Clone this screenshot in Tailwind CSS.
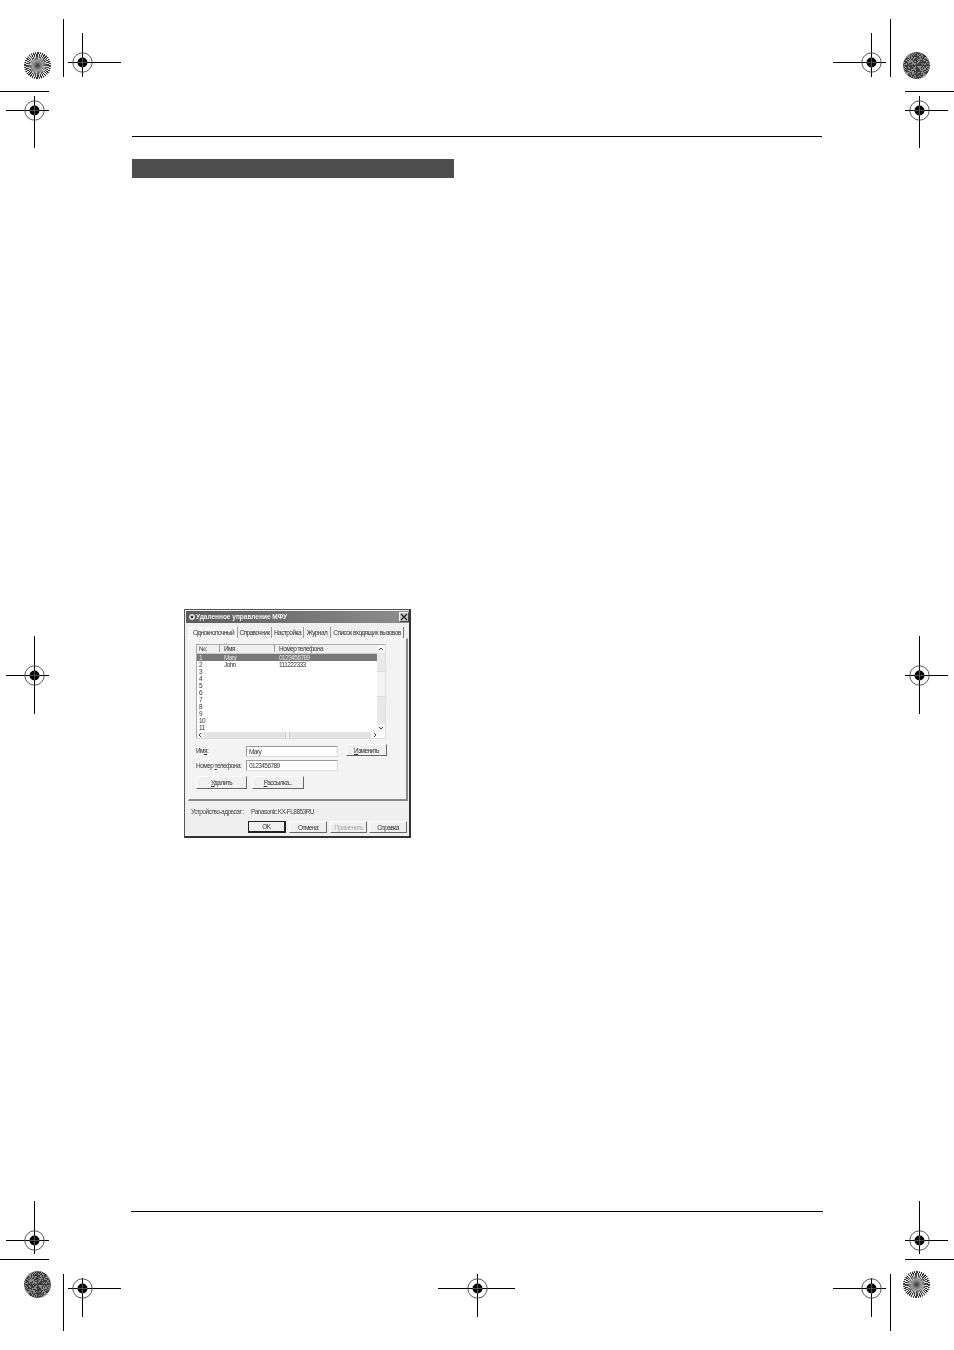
<!DOCTYPE html>
<html lang="ru">
<head>
  <meta charset="UTF-8" />
  <title>Удаленное управление МФУ</title>
  <script src="https://cdn.jsdelivr.net/npm/@tailwindcss/browser@4"></script>
</head>
<body class="bg-white">
<div class="relative w-[954px] h-[1350px] overflow-hidden bg-white font-['Liberation_Sans',Arial,sans-serif] text-[6.5px] leading-[7px] tracking-[-0.55px] whitespace-nowrap text-[#333]">

  <!-- page content -->
  <div class="pt-[136px] pl-[131px] w-[823px]">
    <div class="ml-px mr-px h-px bg-black"></div>
    <div class="mt-[22px] ml-px w-[322px] h-[19px] bg-[#4d4d4d]"></div>

    <!-- dialog -->
    <div class="mt-[431px] ml-[53px] w-[227px] h-[229px] flex flex-col bg-[#efefef] border border-[#555] border-r-2 border-b-2 border-r-[#333] border-b-[#333] blur-[0.4px]">
      <div class="ml-px mt-px h-[12px] shrink-0 flex items-center pb-px bg-gradient-to-r from-[#5c5c5c] to-[#8e8e8e]">
        <svg width="8" height="8" viewBox="0 0 8 8" class="ml-[2px]"><circle cx="4" cy="4" r="3" fill="#ddd"/><circle cx="4" cy="4" r="1.3" fill="#333"/></svg>
        <span class="font-bold text-[6.5px] tracking-normal text-[#f4f4f4]">Удаленное управление МФУ</span>
        <div class="ml-auto w-[10px] h-[10px] flex items-center justify-center bg-[#c9c9c9] border border-[#eee] border-r-[#444] border-b-[#444]">
          <svg width="8" height="8" viewBox="0 0 8 8"><path d="M1 1l6 6M7 1l-6 6" stroke="#222" stroke-width="1.3"/></svg>
        </div>
      </div>

      <!-- tabs -->
      <div class="mt-[4px] ml-[4px] h-[11px] shrink-0 flex items-stretch">
        <div class="w-[48px] pb-[2px] flex items-center justify-center bg-[#f5f5f5] border-t border-l border-white">Однокнопочный</div>
        <div class="w-[35px] flex items-center justify-center border-l border-r border-[#999]">Справочник</div>
        <div class="w-[32px] flex items-center justify-center border-r border-[#999]">Настройка</div>
        <div class="w-[27px] flex items-center justify-center border-r border-[#999]">Журнал</div>
        <div class="w-[73px] flex items-center justify-center border-r border-[#777]">Список входящих вызовов</div>
      </div>

      <!-- tab panel -->
      <div class="ml-[3px] w-[220px] h-[163px] shrink-0 bg-[#f3f3f3] border-l border-t border-white border-r-2 border-b-2 border-r-[#888] border-b-[#888] pt-[5px] pl-[7px]">

        <div class="w-[190px] h-[95px] flex flex-col bg-white border border-[#aaa] border-r-[#ddd] border-b-[#ddd]">
          <div class="flex h-[87px]">
            <div class="w-[181px]">
              <div class="h-[9px] pb-[2px] flex items-center bg-[#f0f0f0] border-b border-[#ccc]">
                <div class="w-[23px] pl-[2px] border-r border-[#999]">№:</div>
                <div class="w-[55px] pl-[4px] border-r border-[#999]">Имя</div>
                <div class="pl-[4px]">Номер телефона</div>
              </div>
              <div class="flex h-[7px] bg-[#787878] text-[#e2e2e2]"><div class="w-[23px] pl-[2px]">1</div><div class="w-[55px] pl-[4px]">Mary</div><div class="pl-[4px]">0123456789</div></div>
              <div class="flex h-[7px]"><div class="w-[23px] pl-[2px]">2</div><div class="w-[55px] pl-[4px]">John</div><div class="pl-[4px]">111222333</div></div>
              <div class="h-[7px] pl-[2px]">3</div>
              <div class="h-[7px] pl-[2px]">4</div>
              <div class="h-[7px] pl-[2px]">5</div>
              <div class="h-[7px] pl-[2px]">6</div>
              <div class="h-[7px] pl-[2px]">7</div>
              <div class="h-[7px] pl-[2px]">8</div>
              <div class="h-[7px] pl-[2px]">9</div>
              <div class="h-[7px] pl-[2px]">10</div>
              <div class="h-[7px] pl-[2px]">11</div>
            </div>
            <div class="w-[8px] flex flex-col items-center justify-between bg-[#e9e9e9]">
              <svg width="8" height="8" viewBox="0 0 8 8" class="bg-[#f7f7f7]"><path d="M2 5l2-2 2 2" stroke="#444" fill="none"/></svg>
              <div class="w-full h-[26px] mb-[10px] bg-[#f4f4f4] border-y border-[#ddd]"></div>
              <svg width="8" height="8" viewBox="0 0 8 8" class="bg-[#f7f7f7]"><path d="M2 3l2 2 2-2" stroke="#444" fill="none"/></svg>
            </div>
          </div>
          <div class="flex h-[6px] w-[181px] items-center justify-between bg-[#e4e4e4]">
            <svg width="7" height="6" viewBox="0 0 7 6" class="bg-[#f7f7f7]"><path d="M4 1L2 3l2 2" stroke="#444" fill="none"/></svg>
            <div class="w-[5px] h-[6px] bg-[#f0f0f0] border-x border-[#ccc]"></div>
            <svg width="7" height="6" viewBox="0 0 7 6" class="bg-[#f7f7f7]"><path d="M3 1l2 2-2 2" stroke="#444" fill="none"/></svg>
          </div>
        </div>

        <div class="mt-[5px] flex items-start h-[13px]">
          <div class="w-[50px] pt-[3px]">Им<u>я</u>:</div>
          <div class="mt-[2px] w-[92px] h-[11px] pl-[2px] flex items-center bg-white border border-[#999] border-r-[#ddd] border-b-[#ddd]">Mary</div>
          <div class="ml-[8px] w-[41px] h-[12px] flex items-center justify-center bg-[#f0f0f0] border border-white border-r-[#666] border-b-[#666]"><span><u>И</u>зменить</span></div>
        </div>
        <div class="mt-[3px] flex items-center h-[11px]">
          <div class="w-[50px]">Номер <u>т</u>елефона:</div>
          <div class="w-[92px] h-[11px] pl-[2px] flex items-center bg-white border border-[#999] border-r-[#ddd] border-b-[#ddd]">0123456789</div>
        </div>
        <div class="mt-[5px] flex gap-[5px]">
          <div class="w-[51px] h-[13px] flex items-center justify-center bg-[#f0f0f0] border border-white border-r-[#666] border-b-[#666]"><span><u>У</u>далить</span></div>
          <div class="w-[52px] h-[13px] flex items-center justify-center bg-[#f0f0f0] border border-white border-r-[#666] border-b-[#666]"><span><u>Р</u>ассылка...</span></div>
        </div>
      </div>

      <div class="mt-[7px] ml-[6px] h-[7px] flex text-[#444]"><span class="w-[60px]">Устройство-адресат :</span><span>Panasonic KX-FL8853RU</span></div>

      <div class="mt-[6px] ml-[63px] flex">
        <div class="w-[38px] h-[12px] flex items-center justify-center bg-[#f0f0f0] border border-[#222] border-r-2 border-b-2">OK</div>
        <div class="w-[38px] h-[12px] ml-[3px] flex items-center justify-center bg-[#f0f0f0] border border-white border-r-[#666] border-b-[#666]">Отмена</div>
        <div class="w-[37px] h-[12px] ml-[3px] flex items-center justify-center bg-[#f0f0f0] border border-white border-r-[#666] border-b-[#666] text-[#aaa]">Применить</div>
        <div class="w-[38px] h-[12px] ml-[2px] flex items-center justify-center bg-[#f0f0f0] border border-white border-r-[#666] border-b-[#666]">Справка</div>
      </div>
    </div>

    <div class="mt-[373px] h-px bg-black"></div>
  </div>

  <!-- print marks: placed on the sheet by coordinates -->
  <svg class="absolute inset-0" width="954" height="1350" viewBox="0 0 954 1350" fill="none" stroke="#000" stroke-width="1">
    <defs>
      <g id="target">
        <circle r="9.7" stroke="#555" stroke-width="1"/>
        <circle r="5" fill="#000" stroke="none"/>
        <path d="M-5 0H5M0-5V5" stroke="#999" stroke-width="0.5"/>
      </g>
    </defs>
    <path d="M68 62.5H121M82.5 33V77M63.5 19V77M6 110.5H49M34.5 96V148M0 91.5H49"/>
    <path d="M833 62.5H886M871.5 33V77M890.5 19V77M905 110.5H948M919.5 96V148M905 91.5H954"/>
    <path d="M6 675.5H49M34.5 636V714M905 675.5H948M919.5 636V714"/>
    <path d="M6 1240.5H49M34.5 1201V1254M0 1259.5H49M68 1288.5H121M82.5 1278V1317M63.5 1274V1331"/>
    <path d="M905 1240.5H948M919.5 1201V1254M905 1259.5H954M833 1288.5H886M871.5 1278V1317M890.5 1274V1331"/>
    <path d="M438 1288.5H515M477.5 1274V1317"/>
    <use href="#target" x="82.5" y="62.5"/>
    <use href="#target" x="34.5" y="110.5"/>
    <use href="#target" x="871.5" y="62.5"/>
    <use href="#target" x="919.5" y="110.5"/>
    <use href="#target" x="34.5" y="675.5"/>
    <use href="#target" x="919.5" y="675.5"/>
    <use href="#target" x="34.5" y="1240.5"/>
    <use href="#target" x="919.5" y="1240.5"/>
    <use href="#target" x="82.5" y="1288.5"/>
    <use href="#target" x="871.5" y="1288.5"/>
    <use href="#target" x="477.5" y="1288.5"/>
  </svg>

  <!-- colour bars of the print marks -->
  <div class="absolute left-[24px] top-[52px] w-[27px] h-[27px] rounded-full blur-[0.4px] bg-[radial-gradient(circle,#333_0,#999_25%,transparent_55%),repeating-conic-gradient(#333_0deg_5deg,#ddd_5deg_10deg)]"></div>
  <div class="absolute left-[903px] top-[1271px] w-[27px] h-[27px] rounded-full blur-[0.4px] bg-[radial-gradient(circle,#333_0,#999_25%,transparent_55%),repeating-conic-gradient(#333_0deg_5deg,#ddd_5deg_10deg)]"></div>
  <div class="absolute left-[903px] top-[52px] w-[27px] h-[27px] rounded-full blur-[0.5px] bg-[repeating-conic-gradient(#3d3d3d_0deg_1.7deg,#8a8a8a_1.7deg_3.1deg)]"></div>
  <div class="absolute left-[24px] top-[1271px] w-[27px] h-[27px] rounded-full blur-[0.5px] bg-[repeating-conic-gradient(#3d3d3d_0deg_1.7deg,#8a8a8a_1.7deg_3.1deg)]"></div>
</div>
</body>
</html>
